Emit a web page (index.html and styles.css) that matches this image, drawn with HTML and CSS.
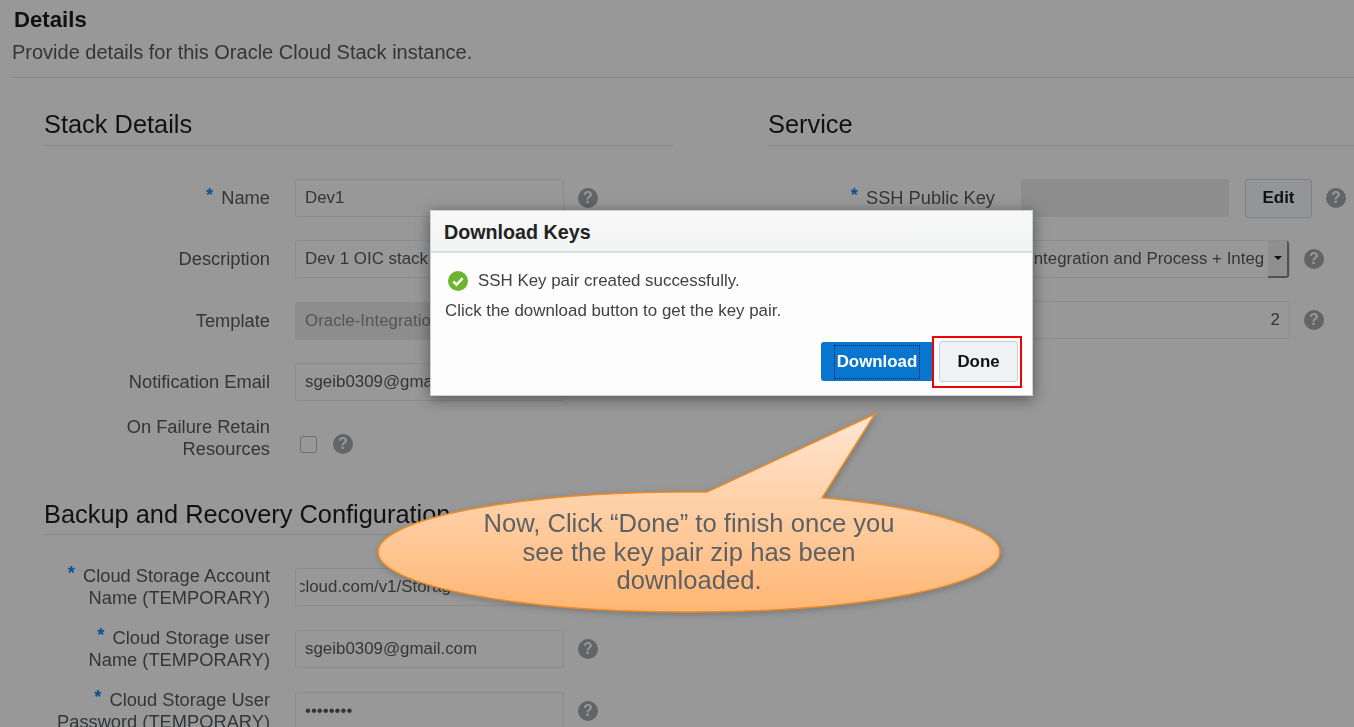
FILE: index.html
```html
<!DOCTYPE html>
<html lang="en">

<head>
    <meta charset="UTF-8">
    <meta name="viewport" content="width=device-width, initial-scale=1.0">
    <title>Download Keys</title>
    <link rel="stylesheet" href="styles.css">
</head>

<body>
    <div class="page">
        <div class="page-head">
            <h1 class="page-title">Details</h1>
            <p class="page-sub">Provide details for this Oracle Cloud Stack instance.</p>
        </div>

        <div class="columns">
            <div class="col col-left">
                <h2 class="section-title">Stack Details</h2>
                <div class="form">
                    <div class="row row-first">
                        <div class="label"><span class="req">*</span> Name</div>
                        <div class="field"><span class="field-text">Dev1</span></div>
                        <span class="help">?</span>
                    </div>
                    <div class="row">
                        <div class="label">Description</div>
                        <div class="field"><span class="field-text">Dev 1 OIC stack for testing</span></div>
                    </div>
                    <div class="row row-first">
                        <div class="label">Template</div>
                        <div class="field field-off"><span class="field-text">Oracle-Integration-Cloud</span></div>
                    </div>
                    <div class="row row-email">
                        <div class="label">Notification Email</div>
                        <div class="field"><span class="field-text">sgeib0309@gmail.com</span></div>
                    </div>
                    <div class="row row-check">
                        <div class="label">On Failure Retain<br>Resources</div>
                        <span class="checkbox"></span>
                        <span class="help">?</span>
                    </div>
                </div>

                <h2 class="section-title section-backup">Backup and Recovery Configuration</h2>
                <div class="form">
                    <div class="row">
                        <div class="label"><span class="req">*</span> Cloud Storage Account<br>Name (TEMPORARY)</div>
                        <div class="field"><span class="field-text field-scrolled">cloud.com/v1/Storage-sgeib</span></div>
                    </div>
                    <div class="row">
                        <div class="label"><span class="req">*</span> Cloud Storage user<br>Name (TEMPORARY)</div>
                        <div class="field"><span class="field-text">sgeib0309@gmail.com</span></div>
                        <span class="help">?</span>
                    </div>
                    <div class="row">
                        <div class="label"><span class="req">*</span> Cloud Storage User<br>Password (TEMPORARY)</div>
                        <div class="field"><span class="field-text">••••••••</span></div>
                        <span class="help">?</span>
                    </div>
                </div>
            </div>

            <div class="col col-right">
                <h2 class="section-title">Service</h2>
                <div class="form">
                    <div class="row row-first">
                        <div class="label"><span class="req">*</span> SSH Public Key</div>
                        <div class="field field-key"></div>
                        <button class="btn-edit">Edit</button>
                        <span class="help">?</span>
                    </div>
                    <div class="row row-first">
                        <div class="label"></div>
                        <div class="field field-select">
                            <span class="field-text">Integration and Process + Integration Cloud</span>
                            <span class="select-arrow"></span>
                        </div>
                        <span class="help">?</span>
                    </div>
                    <div class="row">
                        <div class="label"></div>
                        <div class="field field-number"><span class="field-text">2</span></div>
                        <span class="help">?</span>
                    </div>
                </div>
            </div>
        </div>
    </div>

    <div class="dialog">
        <div class="dialog-head">Download Keys</div>
        <div class="dialog-body">
            <div class="dialog-ok">
                <svg class="ok-icon" viewBox="0 0 20 20" width="20" height="20">
                    <circle cx="10" cy="10" r="10" fill="#6cb52d"/>
                    <path d="M5.2 10.4l3.3 3.3 6.2-6.6" fill="none" stroke="#fff" stroke-width="2.4"/>
                </svg>
                SSH Key pair created successfully.
            </div>
            <div class="dialog-line">Click the download button to get the key pair.</div>
        </div>
        <div class="dialog-foot">
            <button class="btn-download"><span class="btn-focus">Download</span></button>
            <div class="red-box">
                <button class="btn-done">Done</button>
            </div>
        </div>
    </div>

    <div class="callout">
        <svg class="callout-shape" viewBox="370 405 640 220" width="640" height="220">
            <defs>
                <linearGradient id="calloutFill" x1="0" y1="0" x2="0" y2="1">
                    <stop offset="0" stop-color="#ffe6d2"/>
                    <stop offset="1" stop-color="#ffb674"/>
                </linearGradient>
            </defs>
            <path d="M875 414L707 492.1A311 60 0 0 0 378 552A311 60 0 0 0 1000 552A311 60 0 0 0 822 497.8Z" fill="url(#calloutFill)" stroke="#ed8c24" stroke-width="1.5"/>
        </svg>
        <div class="callout-text">Now, Click “Done” to finish once you<br>see the key pair zip has been<br>downloaded.</div>
    </div>
</body>
</html>
```

FILE: styles.css
```css
body {
    margin: 0;
    height: 727px;
    overflow: hidden;
    background-color: #989898;
    font-family: "Liberation Sans", Arial, sans-serif;
    color: #333537;
}

.page {
    filter: blur(0.6px);
}

.page-head {
    margin: 0 0 0 12px;
    padding-top: 7px;
    height: 78px;
    box-sizing: border-box;
    border-bottom: 1px solid #85888c;
}

.page-title {
    margin: 0 0 0 2px;
    font-size: 22.2px;
    line-height: 25px;
    color: #111;
}

.page-sub {
    margin: 8px 0 0;
    font-size: 20px;
    line-height: 24px;
}

.columns {
    display: flex;
    padding-left: 44px;
    gap: 95px;
}

.col-left {
    width: 629px;
    flex: none;
}

.col-right {
    flex: 1;
}

.section-title {
    margin: 0;
    padding-top: 30px;
    height: 68px;
    box-sizing: border-box;
    border-bottom: 1px solid #85888c;
    font-size: 25.4px;
    line-height: 32px;
    font-weight: normal;
    color: #111;
}

.section-backup {
    padding-top: 38px;
    height: 75px;
}

.form {
    padding-top: 33px;
}

.row {
    display: flex;
    align-items: center;
    height: 38px;
    margin-bottom: 24px;
}

.row-first {
    margin-bottom: 23px;
}

.row-email {
    margin-bottom: 15px;
}

.row-check {
    height: 44px;
    margin-bottom: 0;
}

.label {
    width: 226px;
    flex: none;
    margin-right: 25px;
    text-align: right;
    font-size: 18.3px;
    line-height: 22px;
}

.col-right .label {
    width: 227px;
    margin-right: 26px;
}

.req {
    margin-right: 3px;
    color: #0a4f94;
    font-weight: bold;
    position: relative;
    top: -3px;
}

.field {
    width: 269px;
    height: 38px;
    flex: none;
    display: flex;
    align-items: center;
    box-sizing: border-box;
    padding: 0 9px;
    border: 1px solid #8a8d90;
    border-radius: 3px;
    font-size: 16.9px;
}

.field-text {
    flex: 1;
    min-width: 0;
    overflow: hidden;
    white-space: nowrap;
}

.field-scrolled {
    margin-left: -5px;
    text-indent: -3px;
}

.field-off {
    background-color: #8d8d8d;
    color: #555;
}

.field-key {
    width: 208px;
    background-color: #8d8d8d;
    border-color: #8d8d8d;
}

.field-select {
    padding: 0 0 0 7px;
}

.select-arrow {
    width: 21px;
    height: 37px;
    flex: none;
    margin-left: 4px;
    box-sizing: border-box;
    display: flex;
    align-items: center;
    justify-content: center;
    background-color: #8f8f8f;
    border-right: 2px solid #4f5154;
    border-bottom: 2px solid #4f5154;
    border-radius: 0 3px 3px 0;
}

.select-arrow::before {
    content: "";
    border-left: 4px solid transparent;
    border-right: 4px solid transparent;
    border-top: 4px solid #111;
}

.field-number {
    text-align: right;
}

.btn-edit {
    width: 67px;
    height: 39px;
    flex: none;
    margin-left: 16px;
    border: 1px solid #7a8288;
    border-radius: 3px;
    background-color: #939596;
    color: #111;
    font-family: inherit;
    font-size: 16.9px;
    font-weight: bold;
}

.help {
    width: 20px;
    height: 20px;
    flex: none;
    margin-left: 14px;
    border-radius: 50%;
    background-color: #626466;
    color: #989898;
    font-size: 16px;
    font-weight: bold;
    line-height: 20px;
    text-align: center;
}

.checkbox {
    width: 15px;
    height: 15px;
    flex: none;
    margin-left: 5px;
    margin-top: 12px;
    border: 1px solid #6c6e70;
    border-radius: 3px;
}

.checkbox + .help {
    margin-left: 16px;
    margin-top: 12px;
}

/* dialog sits on top of the page */
.dialog {
    position: absolute;
    left: 430px;
    top: 210px;
    width: 603px;
    height: 186px;
    box-sizing: border-box;
    display: flex;
    flex-direction: column;
    background-color: #fdfdfd;
    border: 1px solid #c9d4da;
    box-shadow: 0 3px 14px rgba(0, 0, 0, 0.45);
    filter: blur(0.4px);
}

.dialog-head {
    height: 42px;
    flex: none;
    box-sizing: border-box;
    padding-left: 13px;
    background: linear-gradient(#f7f7f7, #f3f4f4);
    border-bottom: 2px solid #d6dfe4;
    font-size: 19.7px;
    font-weight: bold;
    line-height: 42px;
    color: #222;
}

.dialog-body {
    padding: 18px 0 0 14px;
    font-size: 16.9px;
    color: #3f4143;
}

.dialog-ok {
    display: flex;
    align-items: center;
    gap: 10px;
    height: 20px;
    margin-left: 3px;
}

.ok-icon {
    flex: none;
}

.dialog-line {
    margin-top: 10px;
    line-height: 20px;
}

.dialog-foot {
    display: flex;
    justify-content: flex-end;
    align-items: flex-start;
    margin-top: 15px;
    padding-right: 10px;
}

.btn-download {
    width: 112px;
    height: 39px;
    margin-top: 6px;
    margin-right: -1px;
    padding: 0;
    display: flex;
    align-items: center;
    justify-content: center;
    border: none;
    border-radius: 3px 0 0 3px;
    background-color: #0875cf;
    color: #fff;
    font-family: inherit;
    font-size: 16.9px;
    font-weight: bold;
}

.btn-focus {
    padding: 6px 2px;
    outline: 1px dotted #06233f;
}

.red-box {
    width: 90px;
    height: 52px;
    box-sizing: border-box;
    padding: 3px 2px 0 5px;
    border: 2px solid #f00000;
}

.btn-done {
    width: 100%;
    height: 41px;
    border: 1px solid #c4ced6;
    border-radius: 3px;
    background-color: #eff1f2;
    color: #111;
    font-family: inherit;
    font-size: 16.9px;
    font-weight: bold;
}

/* speech bubble over the form */
.callout {
    position: absolute;
    left: 370px;
    top: 405px;
    width: 640px;
    height: 220px;
    filter: blur(0.4px);
}

.callout-shape {
    display: block;
    filter: drop-shadow(1px 2px 3px rgba(60, 60, 60, 0.35));
}

.callout-text {
    position: absolute;
    left: 0;
    top: 104px;
    width: 638px;
    text-align: center;
    font-size: 25.6px;
    line-height: 28.5px;
    color: #5d6164;
}
```
